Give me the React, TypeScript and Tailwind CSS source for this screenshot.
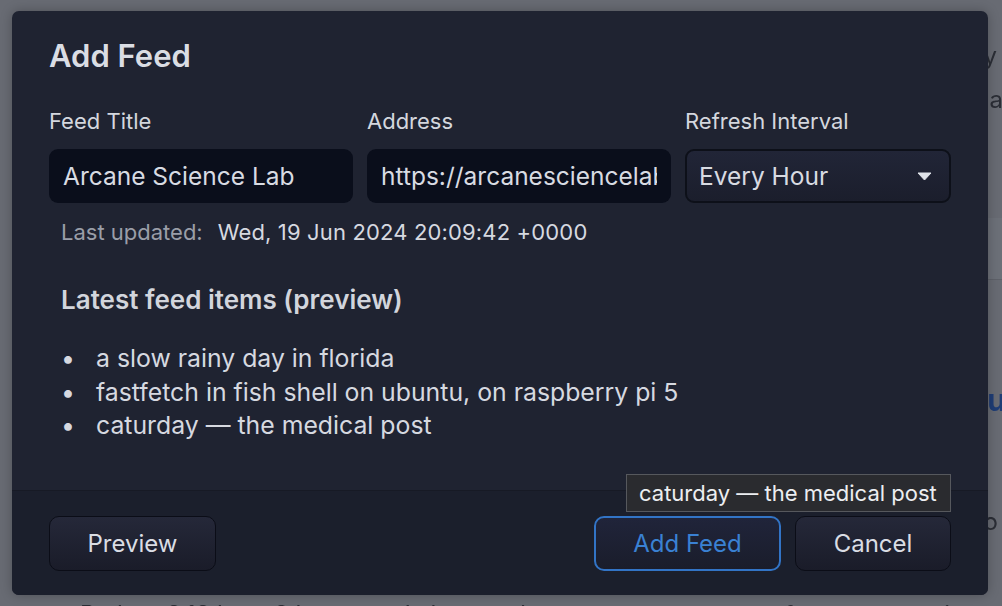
import { useState } from 'react';

const items = [
  'a slow rainy day in florida',
  'fastfetch in fish shell on ubuntu, on raspberry pi 5',
  'caturday — the medical post',
];

const font = { fontFamily: 'Inter, "Noto Sans", sans-serif' };

function Backdrop() {
  // the page behind the modal, dimmed
  return (
    <div className="absolute inset-0 bg-[#686b73] text-[#2b2e36] text-[24px] blur-[0.4px]">
      <div className="flex h-full">
        <div className="w-[700px] shrink-0 flex flex-col justify-end pl-[80px]">
          <p className="leading-[30px] translate-y-[24px] whitespace-nowrap">Python 3.13 beta 3 is out, so I shrugged a</p>
        </div>
        <div className="flex-1 flex flex-col pt-[34px] text-right">
          <p className="leading-[44px] whitespace-nowrap mr-[5px]">and yesterday</p>
          <p className="leading-[44px] whitespace-nowrap -mr-[1px]">we'll see about a</p>
          <div className="mt-[96px] h-[62px] bg-[#6c7078] border-b border-[#5e6169]" />
          <p className="mt-[98px] leading-[44px] whitespace-nowrap -mr-[4px] text-[#1f3d75] font-bold text-[30px]">Au</p>
          <p className="mt-[78px] leading-[44px] whitespace-nowrap -mr-[17px]">to o</p>
          <p className="mt-auto leading-[30px] translate-y-[24px] whitespace-nowrap text-left ml-[48px]">craftsman was orig</p>
        </div>
      </div>
    </div>
  );
}

export default function App() {
  const [interval, setInterval] = useState('Every Hour');

  return (
    <div className="relative w-[1002px] h-[606px] overflow-hidden" style={font}>
      <Backdrop />

      {/* Dialog */}
      <div className="absolute left-[12px] top-[11px] w-[976px] h-[584px] rounded-[7px] bg-[#1f2331] flex flex-col overflow-hidden shadow-[0_0_12px_rgba(0,0,0,0.25)]">
        <div className="flex-1 flex flex-col px-[37px]">
          <h1 className="pt-[27px] text-[31px] leading-[36px] font-semibold text-[#dadde4]">
            Add Feed
          </h1>

          <div className="mt-[33px] flex gap-[14px]">
            <div className="w-[304px] flex flex-col">
              <label className="text-[22px] leading-[28px] text-[#d4d7de]">Feed Title</label>
              <input
                className="mt-[14px] h-[54px] rounded-[9px] bg-[#0a0e1b] px-[14px] text-[24.5px] text-[#d8dbe2] outline-none"
                defaultValue="Arcane Science Lab"
                style={font}
              />
            </div>
            <div className="w-[304px] flex flex-col">
              <label className="text-[22px] leading-[28px] text-[#d4d7de]">Address</label>
              <input
                className="mt-[14px] h-[54px] rounded-[9px] bg-[#0a0e1b] px-[14px] text-[24.5px] text-[#d8dbe2] outline-none"
                defaultValue="https://arcanesciencelab.wordpress.com/feed/"
                style={font}
              />
            </div>
            <div className="w-[266px] flex flex-col">
              <label className="text-[22px] leading-[28px] text-[#d4d7de]">Refresh Interval</label>
              <button
                onClick={() => setInterval(interval)}
                className="mt-[14px] h-[54px] rounded-[9px] bg-gradient-to-b from-[#212537] to-[#1b1e2c] border-2 border-[#0d1019] pl-[12px] pr-[17px] flex items-center justify-between text-[24.5px] text-[#d8dbe2]"
              >
                <span>{interval}</span>
                <svg width="15" height="9" viewBox="0 0 15 9">
                  <path d="M1 1 H14 L7.5 8 Z" fill="#dfe2e8" stroke="#dfe2e8" strokeWidth="1" strokeLinejoin="round" />
                </svg>
              </button>
            </div>
          </div>

          <div className="mt-[15px] pl-[12px] text-[22px] leading-[28px] flex gap-[15px]">
            <span className="text-[#9a9ea8]">Last updated:</span>
            <span className="text-[#d6d9e0] tracking-[0.15px]">Wed, 19 Jun 2024 20:09:42 +0000</span>
          </div>

          <h2 className="mt-[39px] pl-[12px] text-[26px] leading-[30px] font-semibold text-[#d2d5dc]">
            Latest feed items (preview)
          </h2>

          <ul className="mt-[27px] pl-[12px] text-[24.8px] leading-[33.5px] text-[#d6d9e0]">
            {items.map((item) => (
              <li key={item} className="flex">
                <span className="w-[35px]">•</span>
                <span>{item}</span>
              </li>
            ))}
          </ul>
        </div>

        {/* Footer */}
        <div className="h-[105px] border-t border-[#171a25] bg-[#1b1f2c] flex items-start pt-[25px] px-[37px]">
          <button className="w-[167px] h-[55px] rounded-[10px] border-[1.5px] border-[#0b0d17] bg-gradient-to-b from-[#252839] to-[#1a1c29] text-[24px] text-[#dadde4]">
            Preview
          </button>
          <div className="ml-auto flex gap-[14px]">
            <button className="w-[187px] h-[55px] rounded-[10px] border-2 border-[#3274c6] bg-gradient-to-b from-[#20243a] to-[#1a1d2b] text-[24px] text-[#3a81d3]">
              Add Feed
            </button>
            <button className="w-[156px] h-[55px] rounded-[10px] border-[1.5px] border-[#0b0d17] bg-gradient-to-b from-[#252839] to-[#1a1c29] text-[24px] text-[#dadde4]">
              Cancel
            </button>
          </div>
        </div>
      </div>

      {/* Tooltip */}
      <div className="absolute left-[626px] top-[474px] h-[38px] pl-[12px] pr-[13px] flex items-center bg-[#2a2b2f] border border-[#56585d] text-[22px] text-[#eceef1] whitespace-nowrap">
        caturday — the medical post
      </div>
    </div>
  );
}
